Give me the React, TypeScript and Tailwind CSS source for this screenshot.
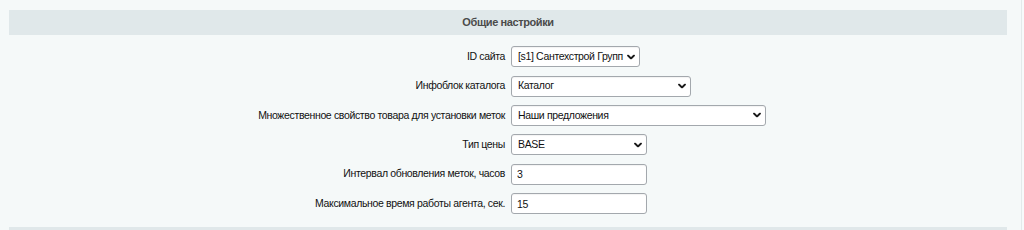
import React from 'react';

type Field = {
    label: string;
    kind: 'select' | 'input';
    value: string;
    options?: string[];
    width: string;
};

const fields: Field[] = [
    { label: 'ID сайта', kind: 'select', value: '[s1] Сантехстрой Групп', options: ['[s1] Сантехстрой Групп'], width: 'w-[129px]' },
    { label: 'Инфоблок каталога', kind: 'select', value: 'Каталог', options: ['Каталог'], width: 'w-[180px]' },
    { label: 'Множественное свойство товара для установки меток', kind: 'select', value: 'Наши предложения', options: ['Наши предложения'], width: 'w-[255px]' },
    { label: 'Тип цены', kind: 'select', value: 'BASE', options: ['BASE'], width: 'w-[136px]' },
    { label: 'Интервал обновления меток, часов', kind: 'input', value: '3', width: 'w-[136px]' },
    { label: 'Максимальное время работы агента, сек.', kind: 'input', value: '15', width: 'w-[136px]' },
];

const controlBase =
    'h-[21px] rounded-[3px] border border-[#a3a8ad] bg-white text-[10.5px] tracking-[-0.35px] text-[#111] shadow-[inset_0_1px_1px_rgba(0,0,0,0.05)] outline-none';

const Chevron = () => (
    <svg
        viewBox="0 0 8 5"
        className="pointer-events-none absolute right-[5px] top-1/2 h-[5px] w-[8px] -translate-y-1/2"
        fill="none"
        stroke="#1a1a1a"
        strokeWidth="1.8"
        strokeLinecap="round"
        strokeLinejoin="round"
    >
        <path d="M1 1 L4 4 L7 1" />
    </svg>
);

const App: React.FC = () => {
    return (
        <div className="flex h-[230px] w-[1024px] overflow-hidden bg-[#f5f9f9] font-['Liberation_Sans',Arial,sans-serif]">
            <div className="w-[1021px] shrink-0 pl-[9px] pr-[14px] pt-[10px]">
                <div className="flex h-[25px] items-center justify-center bg-[#e0e8ea] text-[11px] font-bold tracking-[-0.4px] text-[#4b4b4b]">
                    Общие настройки
                </div>
                <div className="grid grid-cols-2 pt-[7px]">
                    {fields.map((f) => (
                        <React.Fragment key={f.label}>
                            <div className="flex h-[29.4px] items-center justify-end pr-[3px] text-[10.5px] tracking-[-0.35px] text-[#111]">
                                {f.label}
                            </div>
                            <div className="flex h-[29.4px] items-center pl-[3px]">
                                {f.kind === 'select' ? (
                                    <div className={`relative ${f.width}`}>
                                        <select
                                            defaultValue={f.value}
                                            className={`${controlBase} block w-full appearance-none pl-[6px] pr-[14px]`}
                                        >
                                            {f.options?.map((o) => (
                                                <option key={o}>{o}</option>
                                            ))}
                                        </select>
                                        <Chevron />
                                    </div>
                                ) : (
                                    <input defaultValue={f.value} className={`${controlBase} ${f.width} px-[5px]`} />
                                )}
                            </div>
                        </React.Fragment>
                    ))}
                </div>
                <div className="mt-[9px] h-[25px] bg-[#e0e8ea]" />
            </div>
            <div className="w-px shrink-0 bg-[#e3eaea]" />
            <div className="flex-1 bg-[#f7fafa]" />
        </div>
    );
};

export default App;
